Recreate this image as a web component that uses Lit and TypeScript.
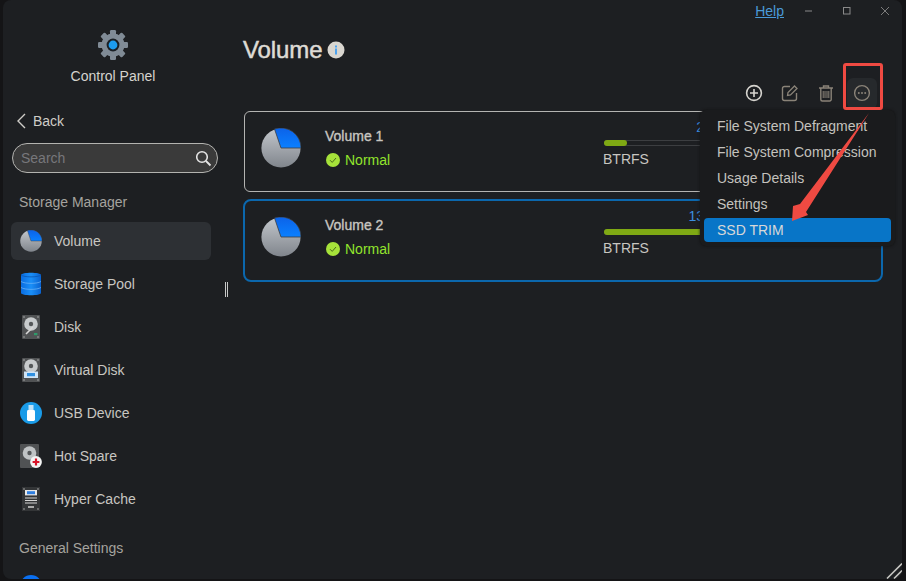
import { LitElement, html, css, svg } from "lit";
import { customElement } from "lit/decorators.js";

const pie = (id: string, s: number) => html`<svg width=${s} height=${s} viewBox="0 0 40 40">
  <defs><linearGradient id=${id} x1="0" y1="0" x2="0" y2="1"><stop offset="0" stop-color="#c3c7cc"/><stop offset="1" stop-color="#80858c"/></linearGradient>
  <linearGradient id="${id}b" x1="0" y1="0" x2="0" y2="1"><stop offset="0" stop-color="#0c62e8"/><stop offset="1" stop-color="#0a80ff"/></linearGradient></defs>
  <circle cx="20" cy="20" r="19.6" fill="url(#${id})"/>
  <path d="M13.5 1 A20 20 0 0 1 40 20 H20 Z" fill="url(#${id}b)" stroke="#3a3d42" stroke-width=".8"/>
</svg>`;

const disk = (inner: unknown) => html`<svg width="20" height="26" viewBox="0 0 20 26">
  <rect x="1" y="1" width="18" height="24" rx="1" fill="#505254"/>
  <g fill="#a8aaac"><circle cx="3" cy="3" r=".8"/><circle cx="17" cy="3" r=".8"/><circle cx="3" cy="23" r=".8"/><circle cx="17" cy="23" r=".8"/></g>
  ${inner}
</svg>`;

const hddInner = svg`<circle cx="10" cy="10" r="6.8" fill="#c8cbcd"/><circle cx="10" cy="10" r="2.2" fill="#55585a"/><path d="M5 20 L12 13" stroke="#d8d8d8" stroke-width="1.6"/><rect x="13" y="19" width="3.4" height="2.2" fill="#2f9a6a"/>`;
const vInner = svg`<circle cx="10" cy="9" r="6.8" fill="#c8cbcd"/><circle cx="10" cy="9" r="2.2" fill="#55585a"/><rect x="3" y="14.5" width="14" height="6.5" fill="#cfe3f5"/><rect x="6" y="16" width="8" height="3.2" fill="#2f8fe0"/>`;
const ssdInner = svg`<rect x="1" y="1" width="18" height="24" rx="1" fill="#333537"/><g fill="#b0b0b0"><circle cx="3" cy="3" r=".8"/><circle cx="17" cy="3" r=".8"/><circle cx="3" cy="23" r=".8"/><circle cx="17" cy="23" r=".8"/></g><rect x="4" y="4" width="12" height="5.4" fill="#e8e8e8"/><rect x="6" y="5.2" width="8" height="3" fill="#2f7fe0"/><g stroke="#d6d6d6" stroke-width="1"><path d="M4 12h12M4 14.5h12M4 17h12"/></g><rect x="7" y="20" width="6" height="2" fill="#aaa"/>`;

const iconPool = html`<svg width="20" height="24" viewBox="0 0 20 24">
  <defs><linearGradient id="pool" x1="0" y1="0" x2="1" y2="0"><stop offset="0" stop-color="#0a6ce0"/><stop offset=".5" stop-color="#1a8ff8"/><stop offset="1" stop-color="#0a62d0"/></linearGradient></defs>
  <path d="M0 3 C0 0 20 0 20 3 V21 C20 24 0 24 0 21 Z" fill="url(#pool)"/>
  <path d="M0 3 C3 5.5 17 5.5 20 3" stroke="#0a55b0" stroke-width=".8" fill="none"/>
  <path d="M0 9.5 C4 12 16 12 20 9.5 M0 15.5 C4 18 16 18 20 15.5" stroke="#66aef5" stroke-width=".8" fill="none"/>
</svg>`;
const iconUsb = html`<svg width="22" height="22" viewBox="0 0 22 22">
  <circle cx="11" cy="11" r="11" fill="#1a9be8"/>
  <rect x="8.5" y="3" width="5" height="5.5" fill="#bfe2f7"/>
  <rect x="7" y="8" width="8" height="11" rx="1.4" fill="#fff"/>
</svg>`;
const iconSpare = html`<svg width="22" height="26" viewBox="0 0 22 26">
  <rect x="0" y="1" width="19" height="24" rx="1" fill="#505254"/>
  <circle cx="9.5" cy="10" r="6.8" fill="#c0c3c5"/><circle cx="9.5" cy="10" r="2.2" fill="#55585a"/>
  <circle cx="16" cy="19" r="5.9" fill="#f4f4f4"/>
  <path d="M16 15.6v6.8M12.6 19h6.8" stroke="#d9142a" stroke-width="2.2"/>
</svg>`;

interface NavItem { label: string; icon: unknown; active?: boolean }
const items: NavItem[] = [
  { label: "Volume", icon: pie("nav", 22), active: true },
  { label: "Storage Pool", icon: iconPool },
  { label: "Disk", icon: disk(hddInner) },
  { label: "Virtual Disk", icon: disk(vInner) },
  { label: "USB Device", icon: iconUsb },
  { label: "Hot Spare", icon: iconSpare },
  { label: "Hyper Cache", icon: disk(ssdInner) },
];

const volumes = [
  { name: "Volume 1", pct: 9.7, num: "2", selected: false },
  { name: "Volume 2", pct: 100, num: "13", selected: true },
];
const menu = ["File System Defragment", "File System Compression", "Usage Details", "Settings", "SSD TRIM"];

@customElement("app-root")
export class AppRoot extends LitElement {
  static styles = css`
    :host { display: block; width: 906px; height: 581px; overflow: hidden; background: #141416; font-family: "Liberation Sans", Arial, sans-serif; color: #d2cfc9; font-size: 14px; }
    .win { position: relative; box-sizing: border-box; margin-left: 3px; width: 899px; height: 579px; background: #1d1f22; border-radius: 8px; display: flex; overflow: hidden; }
    aside { width: 240px; flex: none; box-sizing: border-box; display: flex; flex-direction: column; overflow: hidden; }
    aside > * { flex: none; }
    .brand { display: flex; flex-direction: column; align-items: center; padding-top: 30px; width: 220px; }
    .brand svg { display: block; }
    .brand span { margin-top: 8px; font-size: 14px; line-height: 16px; color: #d5d3ce; }
    .back { display: flex; align-items: center; gap: 7px; margin: 29px 0 0 13px; height: 16px; line-height: 16px; color: #cfcdc8; }
    .search { margin: 14px 0 0 9px; width: 206px; height: 30px; box-sizing: border-box; border: 1px solid #b3b3b0; border-radius: 15px; background: #3a3a3a; display: flex; align-items: center; justify-content: space-between; padding: 0 5px 0 8px; color: #77777a; }
    .section { margin: 21px 0 0 16px; color: #a5a39e; line-height: 16px; }
    nav { display: flex; flex-direction: column; gap: 5px; margin: 12px 0 0 8px; width: 200px; }
    .item { height: 38px; display: flex; align-items: center; border-radius: 6px; color: #c8c6c1; }
    .item.active { background: #2d3034; }
    .ic { width: 22px; margin: 0 12px 0 9px; display: flex; justify-content: center; align-items: center; flex: none; }
    .section.two { margin-top: 22px; }
    .peek { margin: 19px 0 0 17px; width: 22px; height: 22px; border-radius: 50%; background: #0a6ff0; }
    .grip { position: absolute; left: 222px; top: 282px; width: 3px; height: 15px; border-left: 1px solid #c8c8c8; border-right: 1px solid #c8c8c8; box-sizing: border-box; }
    main { flex: 1; min-width: 0; display: flex; flex-direction: column; }
    .top { display: flex; justify-content: flex-end; align-items: center; height: 22px; padding-right: 12px; gap: 28px; }
    .help { color: #4a9ad8; text-decoration: underline; line-height: 22px; margin-right: -8px; }
    .title { display: flex; align-items: center; gap: 5px; margin-top: 14px; height: 28px; }
    h1 { margin: 0; font-size: 24px; font-weight: 400; letter-spacing: -.1px; color: #dedbd5; -webkit-text-stroke: .5px #dedbd5; line-height: 28px; }
    .tools { display: flex; justify-content: flex-end; align-items: center; gap: 14px; height: 22px; margin: 18px 29px 0 0; }
    .t { width: 22px; height: 22px; display: flex; align-items: center; justify-content: center; }
    .t.more { background: #26292c; width: 30px; height: 31px; border-radius: 6px; margin: 0 -4px; }
    .cards { display: flex; flex-direction: column; gap: 7px; margin: 7px 19px 0 0; }
    .card { height: 63px; border: 1px solid #b4b4b2; border-radius: 6px; margin: 0 1px; display: flex; align-items: flex-start; padding: 16px 0 0 16px; position: relative; }
    .card.sel { border: 2px solid #0b67ad; border-radius: 8px; margin: 0; }
    .info { margin-left: 24px; display: flex; flex-direction: column; }
    .name { font-size: 14px; line-height: 18px; color: #c8c6c1; -webkit-text-stroke: .35px #c8c6c1; margin-top: -1px; }
    .status { display: flex; align-items: center; gap: 5px; margin: 7px 0 0 1px; color: #92e52c; line-height: 16px; }
    .use { position: absolute; left: 359px; top: 8px; width: 240px; }
    .num { position: absolute; left: 0; width: 100px; text-align: right; top: -1px; color: #3d8fe0; line-height: 16px; }
    .bar { position: absolute; top: 20px; left: 0; right: 0; height: 6px; border-radius: 3px; border: 1px solid #3c3e41; box-sizing: border-box; }
    .fill { position: absolute; left: -1px; top: -1px; height: 6px; border-radius: 3px; background: #7fa914; }
    .fs { position: absolute; left: -1px; top: 31px; color: #c8c6c1; line-height: 16px; }
    .menu { position: absolute; left: 697px; top: 110px; width: 195px; height: 136px; box-sizing: border-box; background: #1a1b1d; border-radius: 6px; padding: 3px 4px 4px; display: flex; flex-direction: column; box-shadow: 0 0 3px #111; }
    .menu div { height: 26px; line-height: 26px; padding-left: 13px; color: #c4c2bd; border-radius: 4px; white-space: nowrap; }
    .menu div.on { height: 24px; line-height: 24px; margin-top: 1px; background: #0875c7; color: #d8d8d8; }
    .redbox { position: absolute; left: 840px; top: 63px; width: 40px; height: 47px; box-sizing: border-box; border: 3px solid #ef4a42; border-radius: 3px; pointer-events: none; }
    .arrow { position: absolute; left: 777px; top: 105px; pointer-events: none; }
    .resize { position: absolute; right: 0; bottom: 0; }
  `;

  render() {
    return html`<div class="win">
      <aside>
        <div class="brand">
          <svg width="30" height="30" viewBox="0 0 30 30">
            <g fill="#808b96" transform="translate(15 15)">
              ${[0, 45, 90, 135, 180, 225, 270, 315].map((a) => svg`<rect x="-3" y="-15" width="6" height="6" rx="1.2" transform="rotate(${a})"/>`)}
              <circle r="11.5"/>
            </g>
            <circle cx="15" cy="15" r="6.4" fill="#1a2026"/>
            <circle cx="15" cy="15" r="4.4" fill="#1c9cf0"/>
          </svg>
          <span>Control Panel</span>
        </div>
        <div class="back">
          <svg width="10" height="16" viewBox="0 0 10 16"><path d="M9 1 L2 8 L9 15" fill="none" stroke="#cfcdc8" stroke-width="1.4"/></svg>
          <span>Back</span>
        </div>
        <div class="search">
          <span>Search</span>
          <svg width="17" height="17" viewBox="0 0 17 17"><circle cx="7" cy="7" r="5.3" fill="none" stroke="#e4e4e4" stroke-width="1.6"/><path d="M11 11 L15.5 15.5" stroke="#e4e4e4" stroke-width="1.8"/></svg>
        </div>
        <div class="section">Storage Manager</div>
        <nav>
          ${items.map((i) => html`<div class="item ${i.active ? "active" : ""}"><span class="ic">${i.icon}</span>${i.label}</div>`)}
        </nav>
        <div class="section two">General Settings</div>
        <div class="peek"></div>
      </aside>
      <main>
        <div class="top">
          <span class="help">Help</span>
          <svg width="10" height="10" viewBox="0 0 10 10"><path d="M1 5h7" stroke="#8a8a8a"/></svg>
          <svg width="10" height="10" viewBox="0 0 10 10"><rect x="1.5" y="1.5" width="6.5" height="6.5" fill="none" stroke="#8a8a8a"/></svg>
          <svg width="10" height="10" viewBox="0 0 10 10"><path d="M1 1 L9 9 M9 1 L1 9" stroke="#7c7c7c"/></svg>
        </div>
        <div class="title">
          <h1>Volume</h1>
          <svg width="18" height="18" viewBox="0 0 18 18"><circle cx="9" cy="9" r="8.5" fill="#d9d6d0"/><rect x="8" y="7.5" width="2" height="6" fill="#4da3f0"/><rect x="8" y="4.5" width="2" height="2" fill="#4da3f0"/></svg>
        </div>
        <div class="tools">
          <span class="t"><svg width="18" height="18" viewBox="0 0 18 18"><circle cx="9" cy="9" r="7.4" fill="none" stroke="#d6d4cf" stroke-width="1.6"/><path d="M9 5v8M5 9h8" stroke="#d6d4cf" stroke-width="1.6"/></svg></span>
          <span class="t"><svg width="18" height="18" viewBox="0 0 18 18"><path d="M9 2.5H3.5a2 2 0 0 0-2 2v10a2 2 0 0 0 2 2h10a2 2 0 0 0 2-2V9" fill="none" stroke="#8a8378" stroke-width="1.4"/><path d="M6.5 11.5 L7 8.5 L13.5 2 L16 4.5 L9.5 11 Z" fill="none" stroke="#8a8378" stroke-width="1.3"/></svg></span>
          <span class="t"><svg width="16" height="18" viewBox="0 0 16 18"><path d="M1 4h14M5.5 4V2h5v2M2.8 4v11.5a1.5 1.5 0 0 0 1.5 1.5h7.4a1.5 1.5 0 0 0 1.5-1.5V4" fill="none" stroke="#8a8378" stroke-width="1.4"/><path d="M5.2 7v7M7 7v7M9 7v7M10.8 7v7" stroke="#8a8378" stroke-width="1"/></svg></span>
          <span class="t more"><svg width="18" height="18" viewBox="0 0 18 18"><circle cx="9" cy="9" r="7.4" fill="none" stroke="#8a8378" stroke-width="1.4"/><g fill="#8a8378"><circle cx="5.8" cy="9" r="1"/><circle cx="9" cy="9" r="1"/><circle cx="12.2" cy="9" r="1"/></g></svg></span>
        </div>
        <div class="cards">
          ${volumes.map((v) => html`<div class="card ${v.selected ? "sel" : ""}">
            ${pie(v.name.replace(" ", ""), 40)}
            <div class="info">
              <div class="name">${v.name}</div>
              <div class="status">
                <svg width="14" height="14" viewBox="0 0 14 14"><circle cx="7" cy="7" r="7" fill="#a6e23a"/><path d="M4 7.2 L6.2 9.4 L10 5" fill="none" stroke="#4a6a1a" stroke-width="1"/></svg>
                Normal
              </div>
            </div>
            <div class="use">
              <span class="num">${v.num}</span>
              <div class="bar"><div class="fill" style="width:${v.pct}%"></div></div>
              <span class="fs">BTRFS</span>
            </div>
          </div>`)}
        </div>
      </main>
      <div class="grip"></div>
      <div class="menu">
        ${menu.map((m) => html`<div class=${m === "SSD TRIM" ? "on" : ""}>${m}</div>`)}
      </div>
      <div class="redbox"></div>
      <svg class="arrow" width="100" height="125" viewBox="780 105 100 125"><path d="M869 113 L806 212 L808 215 L792 221 L793 206 L800 204 Z" fill="#ef4a42"/></svg>
      <svg class="resize" width="18" height="18" viewBox="0 0 18 18"><path d="M3 17.5 L18 2.5 M10 17.5 L18 9.5" stroke="#c4c4c0" stroke-width="1.6"/></svg>
    </div>`;
  }
}
